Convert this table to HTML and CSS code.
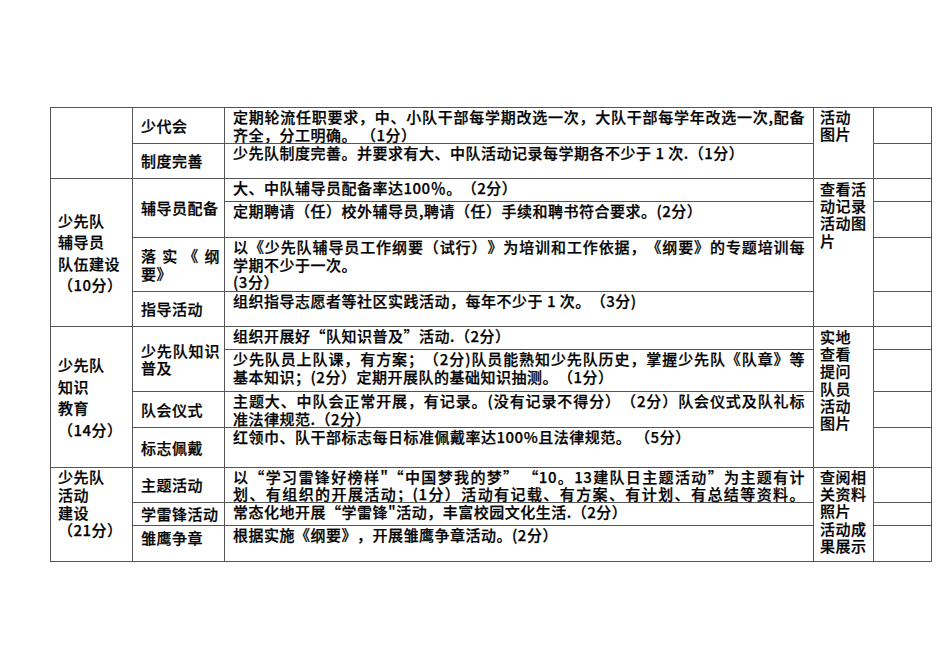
FILE: index.html
```html
<!DOCTYPE html>
<html lang="zh-CN">
<head>
<meta charset="utf-8">
<title>少先队工作考核表</title>
<link rel="stylesheet" href="styles.css">
</head>
<body>
<div class="page">
<table class="grid">
<colgroup>
<col class="c1"><col class="c2"><col class="c3"><col class="c4"><col class="c5">
</colgroup>
<tbody>
<tr class="h36">
  <td class="cat" rowspan="2"></td>
  <td class="item">少代会</td>
  <td class="desc"><span class="jl">定期轮流任职要求，中、小队干部每学期改选一次，大队干部每学年改选一次,配备</span>齐全，分工明确。 （1分）</td>
  <td class="way" rowspan="2">活动<br>图片</td>
  <td class="blank"></td>
</tr>
<tr class="h35">
  <td class="item">制度完善</td>
  <td class="desc">少先队制度完善。并要求有大、中队活动记录每学期各不少于 1 次.（1分）</td>
  <td class="blank"></td>
</tr>
<tr class="h23">
  <td class="cat mid" rowspan="4">少先队<br>辅导员<br>队伍建设<br>（10分）</td>
  <td class="item" rowspan="2">辅导员配备</td>
  <td class="desc">大、中队辅导员配备率达100％。（2分）</td>
  <td class="way pad" rowspan="4">查看活<br>动记录<br>活动图<br>片</td>
  <td class="blank"></td>
</tr>
<tr class="h36">
  <td class="desc">定期聘请（任）校外辅导员,聘请（任）手续和聘书符合要求。(2分）</td>
  <td class="blank"></td>
</tr>
<tr class="h54">
  <td class="item">落实《纲要》</td>
  <td class="desc"><span class="jl">以《少先队辅导员工作纲要（试行）》为培训和工作依据，《纲要》的专题培训每</span>学期不少于一次。<br>(3分）</td>
  <td class="blank"></td>
</tr>
<tr class="h35">
  <td class="item">指导活动</td>
  <td class="desc">组织指导志愿者等社区实践活动，每年不少于 1 次。（3分)</td>
  <td class="blank"></td>
</tr>
<tr class="h23">
  <td class="cat mid" rowspan="4">少先队<br>知识<br>教育<br>（14分）</td>
  <td class="item" rowspan="2">少先队知识普及</td>
  <td class="desc">组织开展好“队知识普及”活动.（2分）</td>
  <td class="way pad" rowspan="4">实地<br>查看<br>提问<br>队员<br>活动<br>图片</td>
  <td class="blank"></td>
</tr>
<tr class="h42">
  <td class="desc"><span class="jl">少先队员上队课，有方案；（2分)队员能熟知少先队历史，掌握少先队《队章》等</span>基本知识；(2分）定期开展队的基础知识抽测。（1分）</td>
  <td class="blank"></td>
</tr>
<tr class="h36">
  <td class="item">队会仪式</td>
  <td class="desc"><span class="jl">主题大、中队会正常开展，有记录。(没有记录不得分）（2分）队会仪式及队礼标</span>准法律规范.（2分）</td>
  <td class="blank"></td>
</tr>
<tr class="h40">
  <td class="item">标志佩戴</td>
  <td class="desc">红领巾、队干部标志每日标准佩戴率达100%且法律规范。 （5分）</td>
  <td class="blank"></td>
</tr>
<tr class="h35">
  <td class="cat top" rowspan="3">少先队<br>活动<br>建设<br>（21分）</td>
  <td class="item">主题活动</td>
  <td class="desc tight"><span class="jl">以“学习雷锋好榜样"“中国梦我的梦” “10。13建队日主题活动”为主题有计</span><span class="jl">划、有组织的开展活动；(1分）活动有记载、有方案、有计划、有总结等资料。</span></td>
  <td class="way" rowspan="3">查阅相<br>关资料<br>照片<br>活动成<br>果展示</td>
  <td class="blank"></td>
</tr>
<tr class="h23">
  <td class="item">学雷锋活动</td>
  <td class="desc">常态化地开展“学雷锋"活动，丰富校园文化生活.（2分）</td>
  <td class="blank"></td>
</tr>
<tr class="h36">
  <td class="item itemtop">雏鹰争章</td>
  <td class="desc">根据实施《纲要》，开展雏鹰争章活动。(2分）</td>
  <td class="blank"></td>
</tr>
</tbody>
</table>
</div>
</body>
</html>
```

FILE: styles.css
```css
html, body {
  margin: 0;
  padding: 0;
  background: #ffffff;
}

.page {
  padding: 107px 0 0 50px;
}

.grid {
  border-collapse: collapse;
  table-layout: fixed;
  width: 881px;
  font-family: "Noto Sans CJK SC", "Noto Sans CJK TC", sans-serif;
  font-size: 15px;
  font-weight: 500;
  letter-spacing: 0.5px;
  color: #000;
  -webkit-text-stroke: 0.25px #000;
  text-spacing-trim: space-all;
}

.c1 { width: 82px; }
.c2 { width: 92px; }
.c3 { width: 589px; }
.c4 { width: 60px; }
.c5 { width: 58px; }

.grid td {
  box-sizing: border-box;
  border: 1px solid #555;
  padding: 0;
  vertical-align: top;
  overflow: hidden;
}

.h23 td { height: 23px; }
.h35 td { height: 35px; }
.h36 td { height: 36px; }
.h40 td { height: 40px; }
.h42 td { height: 42px; }
.h54 td { height: 54px; }

.grid td.cat {
  padding: 0 0 0 7px;
  line-height: 21.5px;
  vertical-align: middle;
}

.grid td.cat.top {
  vertical-align: top;
  line-height: 17.8px;
  padding-top: 0;
}

.grid td.item {
  padding: 0 4px 0 8px;
  line-height: 17.5px;
  vertical-align: middle;
  text-align: justify;
}

.grid td.item.itemtop {
  vertical-align: top;
  padding-top: 3px;
}

.grid td.desc {
  padding: 0 8px 0 8px;
  line-height: 17.5px;
  text-align: justify;
}

.grid td.desc.tight {
  line-height: 17px;
}

.jl {
  display: block;
  text-align: justify;
  text-align-last: justify;
  white-space: nowrap;
}

.grid td.way {
  padding: 0 0 0 6px;
  line-height: 17.2px;
}

.grid td.way.pad {
  padding-top: 1px;
}
```
